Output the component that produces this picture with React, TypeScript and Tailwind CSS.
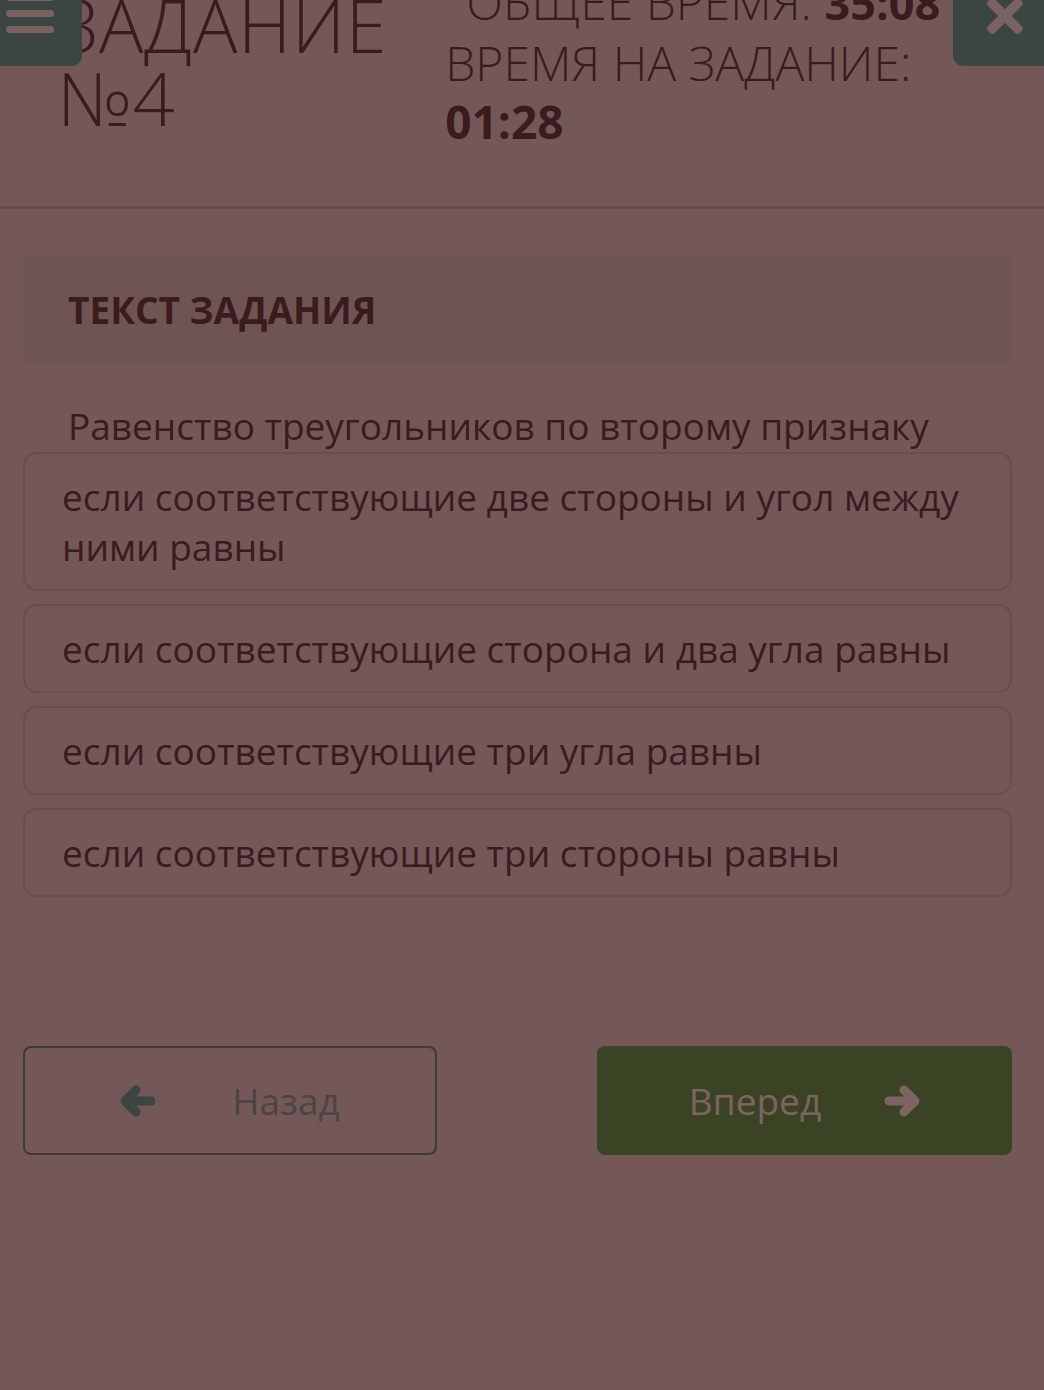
import { FaArrowRight, FaTimes } from 'react-icons/fa';

const options = [
  'если соответствующие две стороны и угол между ними равны',
  'если соответствующие сторона и два угла равны',
  'если соответствующие три угла равны',
  'если соответствующие три стороны равны',
];

function ArrowLeft({ className }: { className?: string }) {
  return (
    <svg width="36" height="32" viewBox="0 0 36 32" className={className}>
      <path
        d="M31 16H6M16 5L5 16L16 27"
        fill="none"
        stroke="currentColor"
        strokeWidth="9"
        strokeLinecap="round"
        strokeLinejoin="round"
      />
    </svg>
  );
}

function ArrowRight({ className }: { className?: string }) {
  return (
    <svg width="36" height="32" viewBox="0 0 36 32" className={className}>
      <path
        d="M5 16H30M20 5L31 16L20 27"
        fill="none"
        stroke="currentColor"
        strokeWidth="9"
        strokeLinecap="round"
        strokeLinejoin="round"
      />
    </svg>
  );
}

export default function App() {
  return (
    <div
      className="relative w-[1044px] h-[1390px] overflow-hidden bg-[#745858] text-[#3a1b1e]"
      style={{ fontFamily: '"Open Sans", "Noto Sans", sans-serif' }}
    >
      {/* menu button */}
      <div className="absolute left-0 top-[-30px] w-[82px] h-[96px] rounded-br-[10px] bg-[#3b4541] flex flex-col gap-[9px] pt-[24px] pl-[6px] z-10">
        <span className="block w-[48px] h-[7px] rounded-sm bg-[#7a6260]" />
        <span className="block w-[48px] h-[7px] rounded-sm bg-[#7a6260]" />
        <span className="block w-[48px] h-[7px] rounded-sm bg-[#7a6260]" />
      </div>

      {/* close button */}
      <div className="absolute right-0 top-[-30px] w-[91px] h-[96px] rounded-bl-[10px] bg-[#3b4541] flex justify-center items-start pt-[20px] pl-[12px] z-10">
        <FaTimes className="text-[#7a6260]" size={52} />
      </div>

      <header className="flex h-[209px] border-b-[3px] border-[#684c4d]">
        <h1 className="ml-[57px] mt-[-12px] text-[74px] leading-[73px] font-light tracking-[0.6px]">
          ЗАДАНИЕ
          <br />
          №4
        </h1>
        <div className="ml-[60px] mt-[-28px] text-[48px] leading-[60px] font-light">
          <div className="pl-[19px]">
            ОБЩЕЕ ВРЕМЯ: <span className="font-bold text-[45px]">35:08</span>
          </div>
          <div className="-ml-[2px]">ВРЕМЯ НА ЗАДАНИЕ:</div>
          <div className="font-bold text-[46px] -mt-[2px] -ml-[2px]">01:28</div>
        </div>
      </header>

      <main className="pl-[23px] pr-[32px]">
        <div className="mt-[47px] h-[107px] rounded-md bg-[#6f5454] flex items-center pl-[45px]">
          <span className="text-[37px] font-bold">ТЕКСТ ЗАДАНИЯ</span>
        </div>

        <p className="mt-[38px] pl-[45px] text-[37px] leading-[50px]">
          Равенство треугольников по второму признаку
        </p>

        <div className="mt-[1px] flex flex-col gap-[13px]">
          {options.map((o) => (
            <div
              key={o}
              className="border-2 border-[#6a4e4f] rounded-[14px] py-[17.5px] pl-[37px] pr-[30px] text-[37px] leading-[50px]"
            >
              {o}
            </div>
          ))}
        </div>

        <div className="mt-[149px] flex justify-between">
          <button className="w-[414px] h-[109px] border-2 border-[#3f3937] rounded-[8px] flex items-center justify-center gap-[76px] text-[#4a4544] text-[37px]">
            <ArrowLeft className="text-[#3b4541]" />
            <span>Назад</span>
          </button>
          <button className="w-[415px] h-[109px] rounded-[8px] bg-[#3a4424] flex items-center justify-center gap-[63px] text-[#7d6462] text-[37px]">
            <span>Вперед</span>
            <ArrowRight className="text-[#7d6462]" />
          </button>
        </div>
      </main>
    </div>
  );
}
